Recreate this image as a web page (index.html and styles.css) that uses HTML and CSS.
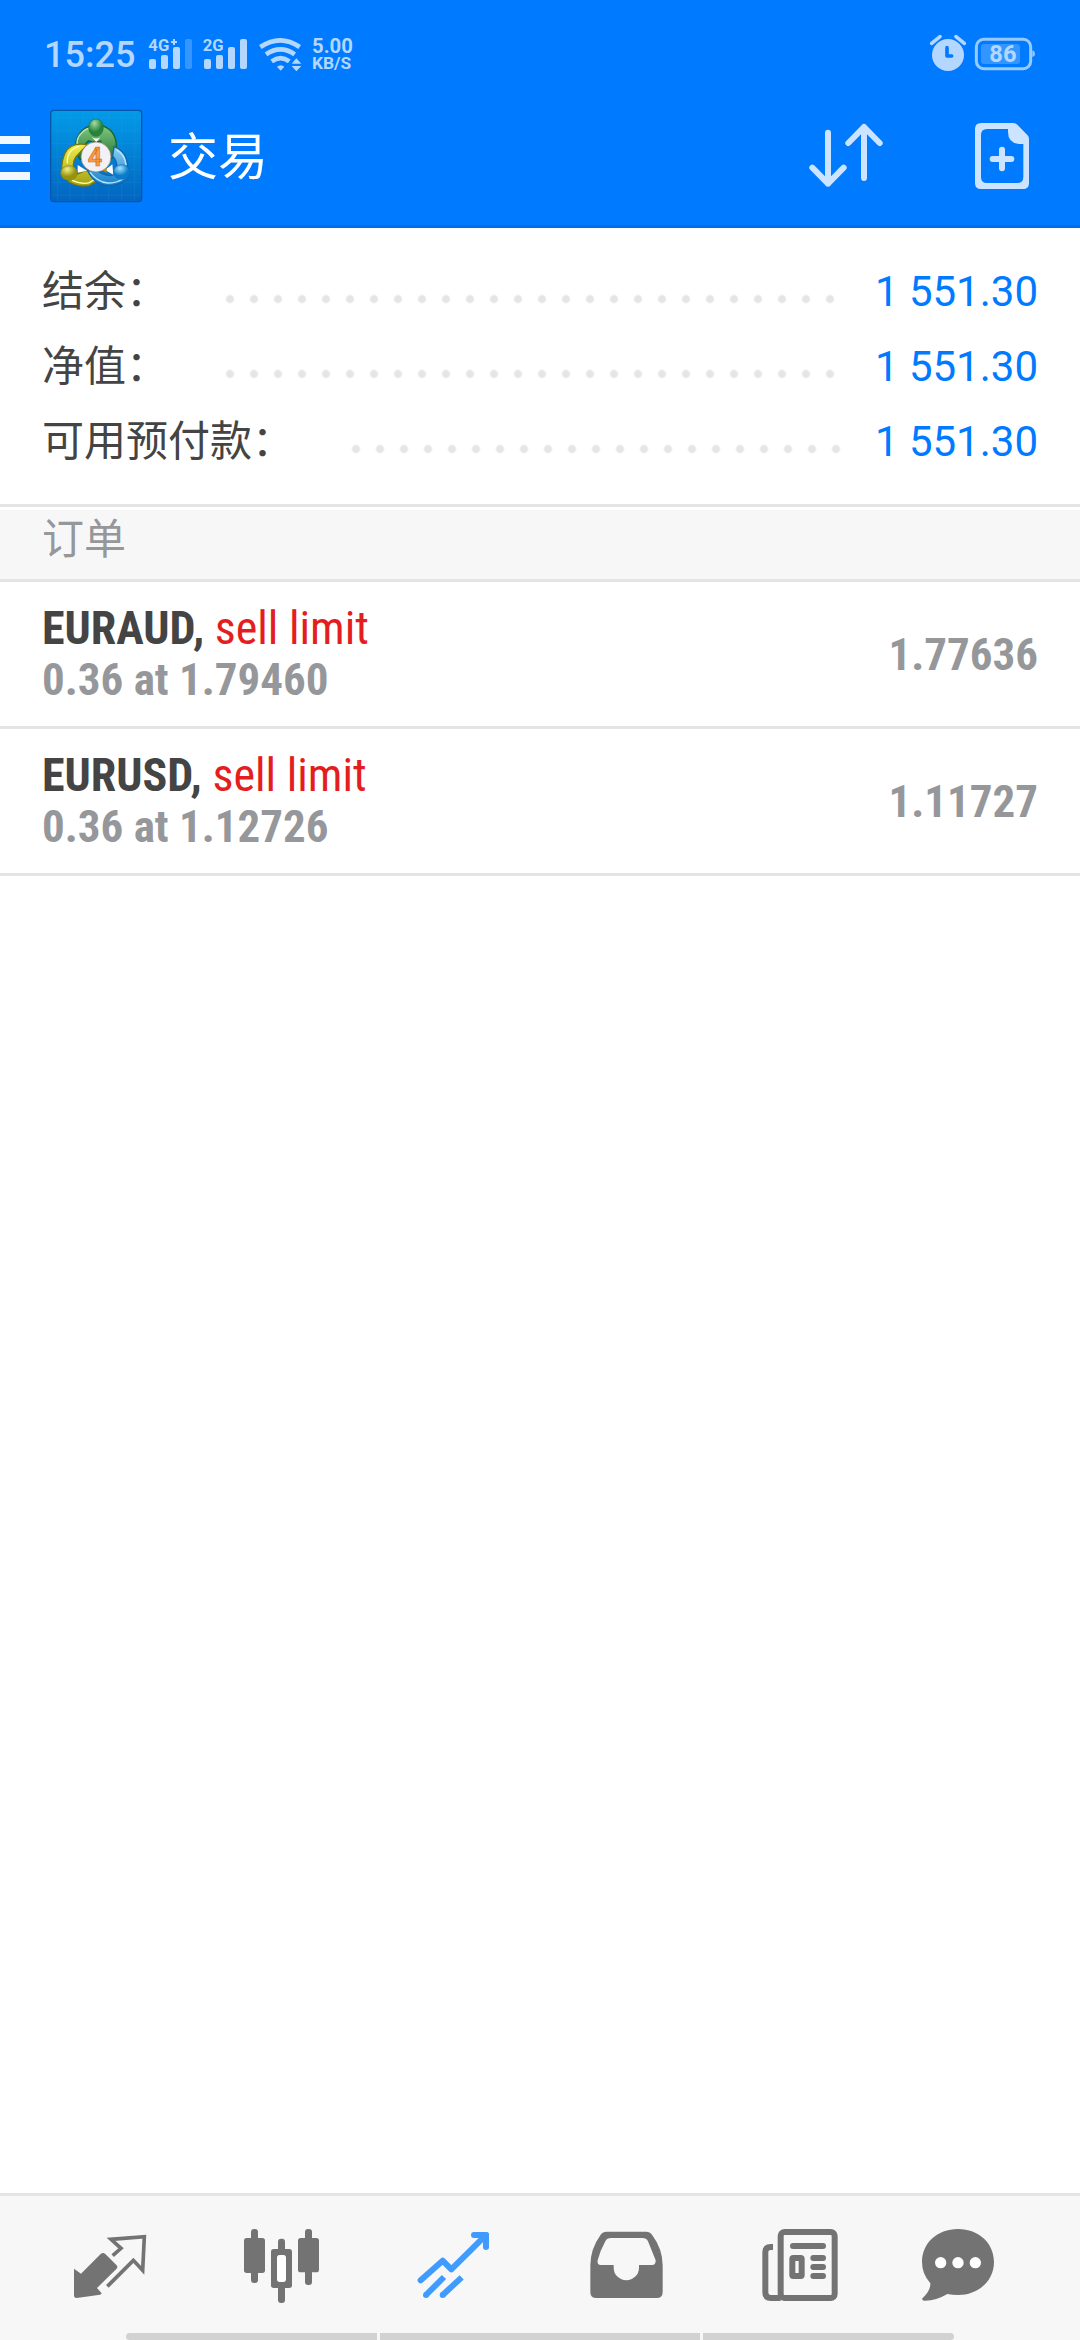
FILE: index.html
```
<!DOCTYPE html>
<html lang="zh-CN">
<head>
  <meta charset="UTF-8" />
  <meta name="viewport" content="width=device-width, initial-scale=1" />
  <title>交易</title>
  <link rel="stylesheet" href="styles.css">
</head>
<body>
  <header class="header">
    <div class="status">
      <time class="clock">15:25</time>
      <svg class="signals" viewBox="438 30 630 150">
        <g class="status-text">
          <text x="445" y="94" font-size="50">4G</text>
          <text x="608" y="94" font-size="50">2G</text>
          <text x="936" y="98" font-size="61">5.00</text>
          <text x="936" y="147" font-size="52">KB/S</text>
        </g>
        <path d="M522 57v18M513 66h18" stroke="#b3d7ff" stroke-width="6" />
        <g fill="#b3d7ff">
          <rect x="447" y="117" width="21" height="30" rx="6" />
          <rect x="483" y="105" width="21" height="42" rx="6" />
          <rect x="519" y="81" width="21" height="66" rx="6" />
          <rect x="555" y="57" width="21" height="90" rx="6" opacity=".3" />
          <rect x="612" y="117" width="21" height="30" rx="6" />
          <rect x="648" y="105" width="21" height="42" rx="6" />
          <rect x="684" y="81" width="21" height="66" rx="6" />
          <rect x="720" y="57" width="21" height="90" rx="6" />
          <path d="M831 140q11-9 22 0l-11 12z" />
          <path d="M875 131l14-16 15 16zM875 138h29l-15 16z" />
        </g>
        <g fill="none" stroke="#b3d7ff" stroke-width="14">
          <path d="M781 81q60-40 118 0" />
          <path d="M798 103q44-30 86 0" />
          <path d="M815 124q27-19 53 0" />
        </g>
      </svg>
      <svg class="battery" viewBox="84 30 330 150">
        <circle cx="144" cy="105" r="48" fill="#b3d7ff" />
        <path d="M95 70l25-20M168 50l25 20" stroke="#b3d7ff" stroke-width="11" stroke-linecap="round" />
        <path d="M141 83v25h14" fill="none" stroke="#007aff" stroke-width="11" stroke-linecap="round" stroke-linejoin="round" />
        <rect x="229" y="58" width="163" height="88" rx="22" fill="none" stroke="#99caff" stroke-width="9" />
        <path d="M397 91q8 2 8 10t-8 10z" fill="#99caff" />
        <rect x="243" y="72" width="117" height="60" rx="9" fill="#3395ff" />
        <text class="status-text" x="268" y="126" font-size="71">86</text>
      </svg>
    </div>
    <div class="toolbar">
      <button class="menu" aria-label="菜单">
        <svg viewBox="0 39 90 288"><path d="M0 123h90v24H0zM0 177h90v24H0zM0 231h90v24H0z" fill="#f2f8ff" /></svg>
      </button>
      <svg class="logo" viewBox="144 39 288 288">
        <defs>
          <linearGradient id="tile" x2="0" y2="1"><stop stop-color="#039be8" /><stop offset="1" stop-color="#0265c0" /></linearGradient>
          <linearGradient id="green" x2="0" y2="1"><stop stop-color="#85c987" /><stop offset="1" stop-color="#1b7328" /></linearGradient>
          <linearGradient id="gold" x2="0" y2="1"><stop stop-color="#f2ee4c" /><stop offset="1" stop-color="#a3a012" /></linearGradient>
          <linearGradient id="sky" x2="0" y2="1"><stop stop-color="#8bd0f5" /><stop offset="1" stop-color="#147dc9" /></linearGradient>
          <radialGradient id="greenHead" cx=".4" cy=".25"><stop stop-color="#a4dba5" /><stop offset="1" stop-color="#28843a" /></radialGradient>
          <radialGradient id="goldHead" cx=".4" cy=".25"><stop stop-color="#f0f08d" /><stop offset="1" stop-color="#97930b" /></radialGradient>
          <radialGradient id="skyHead" cx=".4" cy=".25"><stop stop-color="#a5e2ff" /><stop offset="1" stop-color="#087bcb" /></radialGradient>
        </defs>
        <rect x="152" y="46" width="273" height="274" rx="10" fill="url(#tile)" stroke="#0558a9" stroke-width="4" />
        <path d="M172 48v270M210 48v270M249 48v270M288 48v270M326 48v270M365 48v270M404 48v270M154 69h269M154 108h269M154 146h269M154 185h269M154 224h269M154 262h269M154 300h269" stroke="#4bb5ef" stroke-width="1" opacity=".35" />
        <path d="M240 194q-24-44-3-75 15-24 40-27l23-1q41 8 48 49 4 27-11 48l-19 9-16-59-15 5-22-5q-19 15-17 48z" fill="url(#green)" stroke="#176429" stroke-width="4" />
        <path d="M237 172q-15-38 8-59 14-14 30-14" fill="none" stroke="#bce2b8" stroke-width="4" />
        <path d="M262 149q-51-9-67 26-10 21-10 50l22 36q27 16 61 11l28-17-27-25-12-4-27 12q-19-30-2-53z" fill="url(#gold)" stroke="#757610" stroke-width="4" />
        <path d="M202 205q-3-41 36-51M216 256q31 13 52 7l18-11" fill="none" stroke="#ffffb0" stroke-width="4" />
        <path d="M342 155q40 14 41 63l6 20q-12 25-36 29-34 13-62-5-18-13-29-37l28-1q22 20 47 17l14-23q-1-23-13-34z" fill="url(#sky)" stroke="#1264ac" stroke-width="4" />
        <path d="M270 232q22 29 53 32 28 0 46-13M349 164q26 15 29 46" fill="none" stroke="#b7e7ff" stroke-width="4" />
        <path d="M233 210l28 17-28 6zM315 225l22-17 3 31zM275 126q15 9 27 0l-13 15z" fill="#fff" />
        <path d="M302 224l18 9v-15z" fill="#b88b09" />
        <ellipse cx="288" cy="98" rx="22" ry="26" fill="url(#greenHead)" stroke="#217632" stroke-width="2" />
        <ellipse cx="207" cy="234" rx="25" ry="22" fill="url(#goldHead)" stroke="#868410" stroke-width="2" />
        <ellipse cx="365" cy="231" rx="25" ry="22" fill="url(#skyHead)" stroke="#0e70b8" stroke-width="2" />
        <circle cx="288" cy="186" r="45" fill="#f1f1f6" stroke="#8c7c72" stroke-width="2" />
        <text class="logo-text" x="285" y="213" text-anchor="middle">4</text>
      </svg>
      <h1 class="title">交易</h1>
      <button class="tool" aria-label="排序">
        <svg viewBox="54 39 288 288"><path d="M144 113v153M97 218l47 48 47-48M252 249V96M205 144l47-48 47 48" fill="none" stroke="#cce4ff" stroke-width="18" stroke-linecap="round" stroke-linejoin="round" /></svg>
      </button>
      <button class="tool" aria-label="新订单">
        <svg viewBox="522 39 288 288">
          <path fill="#cce4ff" fill-rule="evenodd" d="M603 84h97q7 0 12 5l30 31q5 5 5 12v132q0 18-18 18H603q-18 0-18-18V102q0-18 18-18zm18 18q-18 0-18 18v126q0 18 18 18h91q18 0 18-18v-99h-12q-34-3-34-36v-9z" />
          <path d="M666 164v56M638 192h56" stroke="#cce4ff" stroke-width="18" stroke-linecap="round" />
        </svg>
      </button>
    </div>
  </header>

  <main class="content">
    <dl class="summary">
      <div class="summary-row"><dt>结余：</dt><dd>1 551.30</dd></div>
      <div class="summary-row"><dt>净值：</dt><dd>1 551.30</dd></div>
      <div class="summary-row"><dt>可用预付款：</dt><dd>1 551.30</dd></div>
    </dl>
    <h2 class="section-title">订单</h2>
    <ul class="orders">
      <li class="order">
        <div>
          <p class="deal"><b>EURAUD,</b> <span class="type">sell limit</span></p>
          <p class="volume">0.36 at 1.79460</p>
        </div>
        <span class="price">1.77636</span>
      </li>
      <li class="order">
        <div>
          <p class="deal"><b>EURUSD,</b> <span class="type">sell limit</span></p>
          <p class="volume">0.36 at 1.12726</p>
        </div>
        <span class="price">1.11727</span>
      </li>
    </ul>
  </main>

  <footer class="footer">
    <nav class="tabs">
      <a href="#quotes" aria-label="行情">
        <svg viewBox="66 111 288 288">
          <path d="M102 266l21 15 59-59q7-6 14 0l33 33q6 6 0 12l-58 57 14 16q-1 3-5 4l-70 10q-8 0-8-8z" fill="#737373" />
          <path d="M218 227l25-22-30-27 100-8-5 101-28-30-78 78" fill="none" stroke="#737373" stroke-width="11" />
        </svg>
      </a>
      <a href="#charts" aria-label="图表">
        <svg viewBox="582 111 288 288">
          <g fill="#737373">
            <rect x="633" y="147" width="21" height="162" rx="9" />
            <rect x="612" y="174" width="63" height="105" rx="8" />
            <rect x="714" y="176" width="21" height="193" rx="9" />
            <rect x="693" y="207" width="63" height="117" rx="8" />
            <rect x="795" y="147" width="21" height="168" rx="9" />
            <rect x="774" y="174" width="63" height="103" rx="8" />
          </g>
          <rect x="711" y="225" width="27" height="81" rx="8" fill="#fff" />
        </svg>
      </a>
      <a href="#trade" aria-label="交易" aria-current="page">
        <svg viewBox="78 111 288 288">
          <g fill="none" stroke="#409bff" stroke-width="18">
            <path d="M122 301l66-59 26 26L313 170M282 165h36v36" stroke-linecap="round" stroke-linejoin="round" />
            <path d="M192 291l-54 54M245 292l-57 53" />
          </g>
          <path d="M300 156h18q9 0 9 9v18z" fill="#409bff" />
          <circle cx="138" cy="345" r="9" fill="#409bff" />
          <circle cx="188" cy="345" r="9" fill="#409bff" />
        </svg>
      </a>
      <a href="#history" aria-label="历史">
        <svg viewBox="594 111 288 288">
          <path d="M680 155h118q12 0 18 9 32 43 32 92v80q0 18-18 18H649q-18 0-18-18v-80q0-49 31-92 6-9 18-9z" fill="#737373" />
          <path d="M693 174h94q12 0 17 10l23 57q1 14-11 14h-39v8a38 38 0 0 1-76 0v-8h-38q-13 0-10-14 7-28 23-57 5-10 17-10z" fill="#f7f7f7" />
        </svg>
      </a>
      <a href="#news" aria-label="新闻">
        <svg viewBox="60 111 288 288">
          <g fill="none" stroke="#737373" stroke-width="18">
            <rect x="152" y="156" width="162" height="198" rx="12" />
            <path d="M129 201h-6q-17 0-17 16v120q0 17 17 17h29" />
            <path d="M189 198h90M250 234h29M250 261h29M250 288h29" stroke-linecap="round" />
            <rect x="187" y="234" width="28" height="54" rx="3" />
          </g>
        </svg>
      </a>
      <a href="#mail" aria-label="邮箱">
        <svg viewBox="576 111 288 288">
          <path d="M684 147c63 0 108 43 108 99s-46 99-108 99q-17 0-32-3-33 20-67 20-8 1-9-6 26-23 25-46-25-28-25-64c0-56 45-99 108-99z" fill="#737373" />
          <g fill="#fff"><circle cx="632" cy="248" r="17" /><circle cx="684" cy="248" r="17" /><circle cx="736" cy="248" r="17" /></g>
        </svg>
      </a>
    </nav>
    <div class="gesture-bar"><i></i><i></i><i></i></div>
  </footer>
</body>
</html>
```

FILE: styles.css
```
* {
  box-sizing: border-box;
  margin: 0;
  padding: 0;
}
body {
  background: #fff;
  font-family: Roboto, "Noto Sans CJK SC", sans-serif;
  color: #444;
  min-height: 100vh;
  display: flex;
  flex-direction: column;
}
svg {
  display: block;
}
button {
  border: none;
  background: none;
  cursor: pointer;
}
.header {
  background: #007aff;
  border-bottom: 3px solid #006ee6;
}
.status {
  display: flex;
  align-items: center;
  height: 108px;
  padding: 2px 42px 0 44px;
}
.clock {
  font-size: 36px;
  font-weight: 500;
  color: #b3d7ff;
}
.signals {
  width: 210px;
  height: 50px;
  margin-left: 11px;
}
.battery {
  width: 110px;
  height: 50px;
  margin-left: auto;
}
.status-text {
  fill: #b3d7ff;
  font-weight: 700;
}
.toolbar {
  display: flex;
  align-items: center;
  padding: 0 30px 21px 0;
}
.menu {
  width: 30px;
  height: 96px;
}
.logo {
  width: 96px;
  height: 96px;
  margin-left: 18px;
}
.logo-text {
  font-size: 76px;
  font-weight: 700;
  fill: #f5a040;
  stroke: #df6a20;
  stroke-width: 2px;
}
.title {
  flex: 1;
  margin-left: 24px;
  padding-top: 3px;
  font-size: 50px;
  line-height: 60px;
  font-weight: 400;
  color: #fff;
}
.tool {
  width: 96px;
  height: 96px;
}
.tool + .tool {
  margin-left: 60px;
}
.content {
  flex: 1;
}
.summary {
  padding: 26px 42px 25px;
  border-bottom: 3px solid #e4e4e4;
  font-size: 42px;
}
.summary-row {
  display: flex;
  align-items: center;
  line-height: 75px;
}
/* dotted leader between label and value */
.summary-row::after {
  content: "";
  order: 1;
  flex: 1;
  height: 24px;
  margin: 14px 28px 0 50px;
  background: radial-gradient(circle, #e5e5e5 3px, transparent 5px) 0 0 / 24px 24px repeat-x;
}
.summary-row dd {
  order: 2;
  color: #007aff;
}
.section-title {
  margin-top: 3px;
  padding-bottom: 9px;
  background: #f7f7f7;
  border-bottom: 3px solid #e4e4e4;
  padding-left: 42px;
  font-size: 42px;
  line-height: 60px;
  font-weight: 400;
  color: #96979b;
}
.orders {
  list-style: none;
  font-family: "Roboto Condensed", Roboto, sans-serif;
  font-size: 45px;
  line-height: 51px;
}
.order {
  display: flex;
  justify-content: space-between;
  align-items: center;
  padding: 21px 42px;
  border-bottom: 3px solid #e4e4e4;
}
.deal {
  font-size: 46px;
}
.type {
  color: #e41e1e;
}
.volume,
.price {
  font-weight: 700;
  color: #96979b;
}
.footer {
  background: #f7f7f7;
  border-top: 3px solid #e4e4e4;
}
.tabs {
  display: grid;
  grid-template-columns: repeat(6, 1fr);
  justify-items: center;
  padding: 21px 24px 20px;
}
.tabs svg {
  width: 96px;
  height: 96px;
}
.gesture-bar {
  display: grid;
  grid-template-columns: 11fr 14fr 11fr;
  gap: 3px;
  height: 7px;
  margin: 0 126px;
  border-radius: 4px;
  overflow: hidden;
}
.gesture-bar i {
  background: #d2d2d2;
}
```
